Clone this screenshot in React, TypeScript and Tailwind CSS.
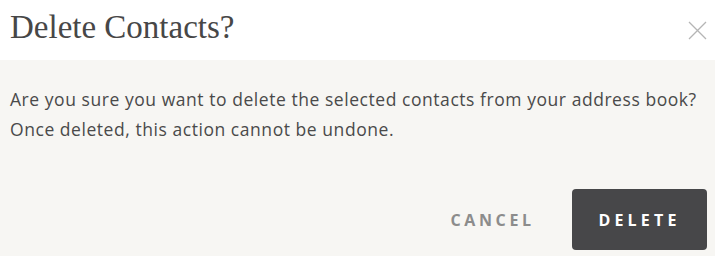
export default function App() {
  return (
    <div className="w-[715px] h-[256px] flex flex-col bg-[#f7f6f3]">
      <div className="h-[60px] flex items-center justify-between bg-white pl-[10px] pr-[8px]">
        <h2 className="text-[33px] leading-none text-[#474747] font-['Liberation_Serif',serif] pb-[6px]">
          Delete Contacts?
        </h2>
        <button type="button" aria-label="Close" className="w-[20px] h-[20px] flex items-center justify-center text-[#b5b5b5]">
          <svg width="19" height="19" viewBox="0 0 19 19" fill="none" stroke="currentColor" strokeWidth="1.3">
            <path d="M1 1L18 18M18 1L1 18" />
          </svg>
        </button>
      </div>
      <div className="flex-1 flex flex-col px-[10px] pt-[24px] font-['Open_Sans',sans-serif]">
        <p className="text-[17.5px] tracking-[0.55px] leading-[30px] text-[#4a4a4a] whitespace-nowrap">
          Are you sure you want to delete the selected contacts from your address book?
          <br />
          Once deleted, this action cannot be undone.
        </p>
        <div className="mt-auto mb-[6px] flex items-center justify-end gap-[41px] -mr-[2px]">
          <button type="button" className="text-[16px] font-bold tracking-[3.6px] -mr-[3.6px] text-[#8c8c8c]">
            CANCEL
          </button>
          <button type="button" className="w-[135px] h-[61px] rounded-[4px] bg-[#474749] text-[16px] font-bold tracking-[4.2px] text-white">
            DELETE
          </button>
        </div>
      </div>
    </div>
  );
}
